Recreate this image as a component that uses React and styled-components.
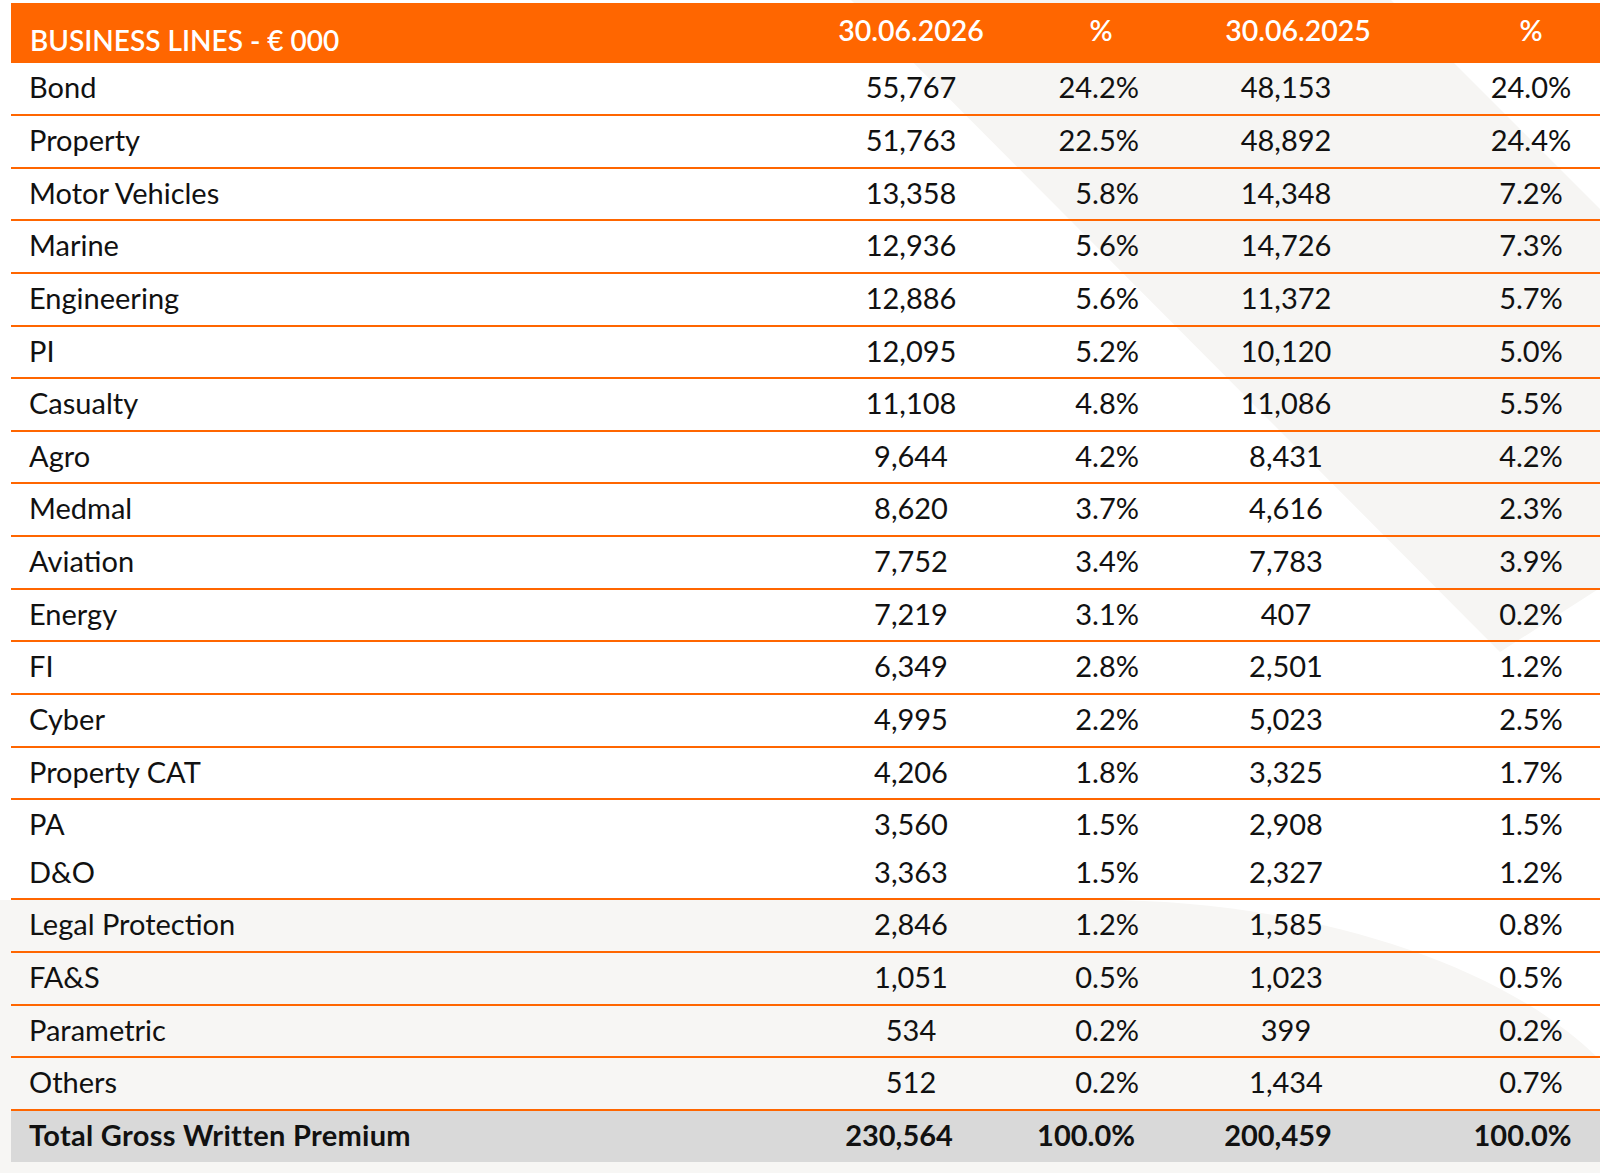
import styled, { createGlobalStyle } from "styled-components";

const ORANGE = "#ff6600";
const COLS = "789px 222px 158px 216px 204px";

const GlobalStyle = createGlobalStyle`
  html, body {
    margin: 0;
    padding: 0;
  }
  body {
    font-family: Lato, "Open Sans", sans-serif;
    color: #111;
    background: #fff;
  }
`;

const Page = styled.div`
  position: relative;
  width: 1600px;
  height: 1173px;
  overflow: hidden;
  background: #fff;
`;

const Backdrop = styled.svg`
  position: absolute;
  top: 0;
  left: 0;
  width: 1600px;
  height: 1173px;
`;

const Table = styled.div`
  position: relative;
  margin-left: 11px;
  padding-top: 3px;
`;

const HeaderRow = styled.div`
  display: grid;
  grid-template-columns: ${COLS};
  height: 60.3px;
  background: ${ORANGE};
  color: #fff;
  font-size: 28.5px;
  font-weight: 600;
`;

const HeadCell = styled.div`
  display: flex;
  align-items: center;
  justify-content: ${(p) => (p.$left ? "flex-start" : "center")};
  padding: ${(p) => p.$pad};
  font-size: ${(p) => (p.$left ? "28px" : "inherit")};
  white-space: nowrap;
`;

const Row = styled.div`
  display: grid;
  grid-template-columns: ${COLS};
  box-sizing: border-box;
  height: ${(p) => (p.$tall ? "100px" : p.$total ? "51.2px" : "52.65px")};
  border-bottom: ${(p) => (p.$total ? "none" : `2px solid ${ORANGE}`)};
  background: ${(p) => (p.$total ? "#d9d9d9" : "transparent")};
  font-size: 29px;
  font-weight: ${(p) => (p.$total ? 700 : 400)};
`;

const Cell = styled.div`
  display: flex;
  flex-direction: column;
  justify-content: center;
  align-items: ${(p) => p.$align};
  padding: 0 ${(p) => p.$pr}px 4px ${(p) => p.$pl}px;
  line-height: 48px;
  letter-spacing: ${(p) => p.$track || 0}px;
  white-space: nowrap;
`;

const numCols = [
  { align: "center", pl: 0, pr: 0, tpr: 24 },
  { align: "flex-end", pl: 0, pr: 41, tpr: 45 },
  { align: "center", pl: 0, pr: 4, tpr: 20 },
  { align: "center", pl: 66, pr: 0, tpr: 17 },
];

const rows = [
  ["Bond", "55,767", "24.2%", "48,153", "24.0%"],
  ["Property", "51,763", "22.5%", "48,892", "24.4%"],
  ["Motor Vehicles", "13,358", "5.8%", "14,348", "7.2%"],
  ["Marine", "12,936", "5.6%", "14,726", "7.3%"],
  ["Engineering", "12,886", "5.6%", "11,372", "5.7%"],
  ["PI", "12,095", "5.2%", "10,120", "5.0%"],
  ["Casualty", "11,108", "4.8%", "11,086", "5.5%"],
  ["Agro", "9,644", "4.2%", "8,431", "4.2%"],
  ["Medmal", "8,620", "3.7%", "4,616", "2.3%"],
  ["Aviation", "7,752", "3.4%", "7,783", "3.9%"],
  ["Energy", "7,219", "3.1%", "407", "0.2%"],
  ["FI", "6,349", "2.8%", "2,501", "1.2%"],
  ["Cyber", "4,995", "2.2%", "5,023", "2.5%"],
  ["Property CAT", "4,206", "1.8%", "3,325", "1.7%"],
  [
    ["PA", "D&O"],
    ["3,560", "3,363"],
    ["1.5%", "1.5%"],
    ["2,908", "2,327"],
    ["1.5%", "1.2%"],
  ],
  ["Legal Protection", "2,846", "1.2%", "1,585", "0.8%"],
  ["FA&S", "1,051", "0.5%", "1,023", "0.5%"],
  ["Parametric", "534", "0.2%", "399", "0.2%"],
  ["Others", "512", "0.2%", "1,434", "0.7%"],
];

const total = ["Total Gross Written Premium", "230,564", "100.0%", "200,459", "100.0%"];

function Lines({ value }) {
  const list = Array.isArray(value) ? value : [value];
  return list.map((v) => <span key={v}>{v}</span>);
}

function DataRow({ cells, isTotal }) {
  const [label, ...nums] = cells;
  return (
    <Row $tall={Array.isArray(label)} $total={isTotal}>
      <Cell $align="flex-start" $pl={18} $pr={0} $track={isTotal ? 0.3 : 0}>
        <Lines value={label} />
      </Cell>
      {nums.map((n, i) => {
        const c = numCols[i];
        return (
          <Cell key={i} $align={c.align} $pl={c.pl} $pr={isTotal ? c.tpr : c.pr}>
            <Lines value={n} />
          </Cell>
        );
      })}
    </Row>
  );
}

function Background() {
  return (
    <Backdrop viewBox="0 0 1600 1173">
      <rect width="1600" height="1173" fill="#ffffff" />
      <polygon points="851,0 1391,0 1600,209 1600,588 1500,652" fill="#f6f5f3" />
      <path d="M0 900 H1100 C1300 900 1500 960 1600 1060 V1173 H0 Z" fill="#f7f6f4" />
    </Backdrop>
  );
}

export default function App() {
  return (
    <Page>
      <GlobalStyle />
      <Background />
      <Table>
        <HeaderRow>
          <HeadCell $left $pad="14px 0 0 19px">BUSINESS LINES - € 000</HeadCell>
          <HeadCell $pad="0 0 7px 0">30.06.2026</HeadCell>
          <HeadCell $pad="0 0 7px 0">%</HeadCell>
          <HeadCell $pad="0 0 7px 20px">30.06.2025</HeadCell>
          <HeadCell $pad="0 0 7px 66px">%</HeadCell>
        </HeaderRow>
        {rows.map((r, i) => (
          <DataRow key={i} cells={r} />
        ))}
        <DataRow cells={total} isTotal />
      </Table>
    </Page>
  );
}
